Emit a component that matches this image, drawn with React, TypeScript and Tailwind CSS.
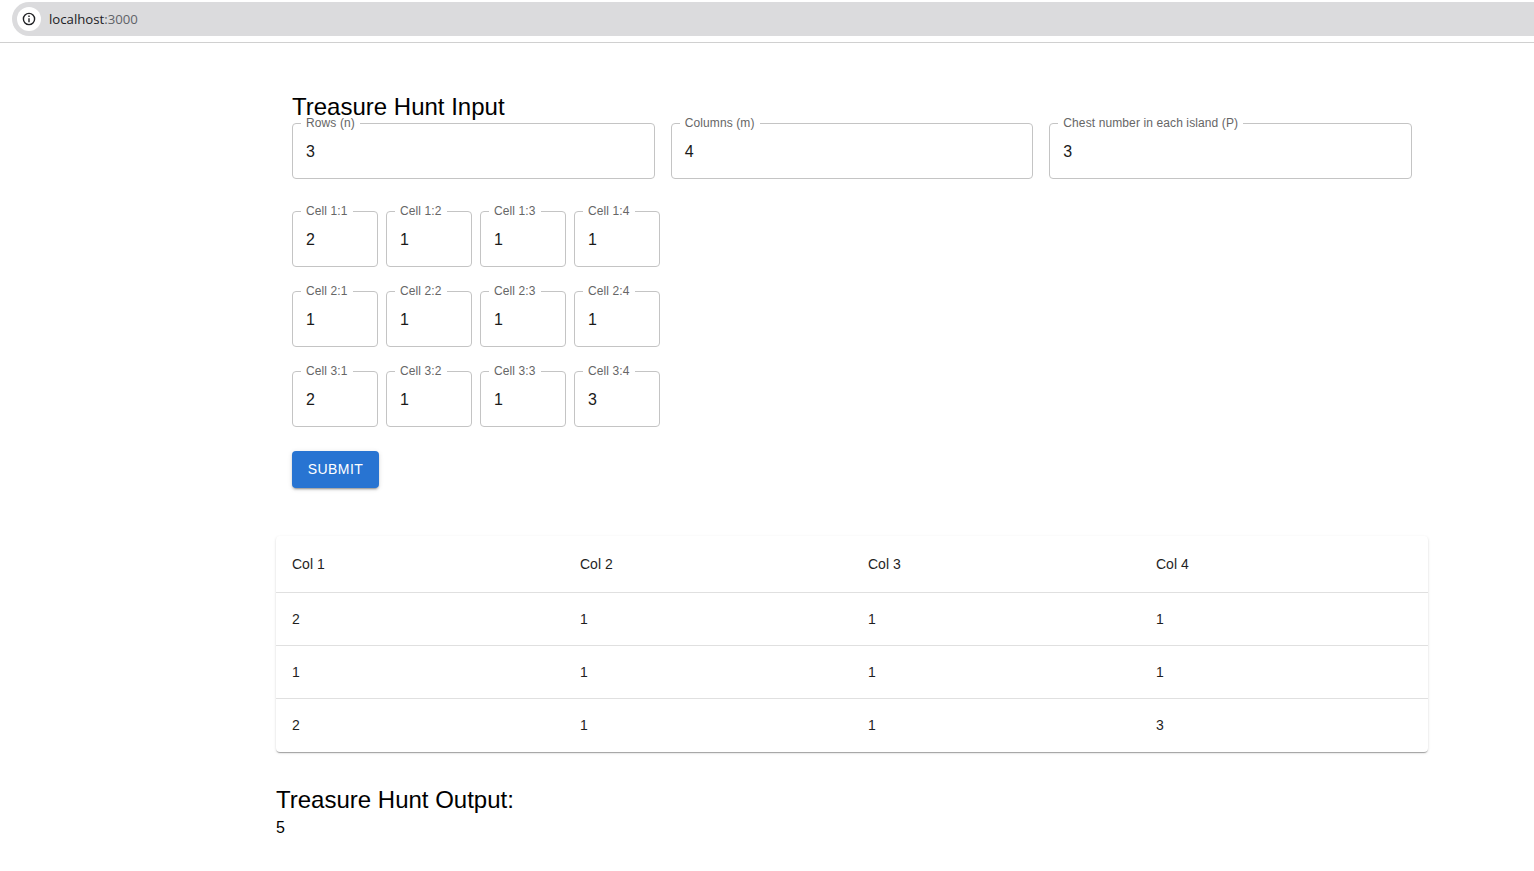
const params = [
  { label: "Rows (n)", value: "3" },
  { label: "Columns (m)", value: "4" },
  { label: "Chest number in each island (P)", value: "3" },
]

const grid = [
  [2, 1, 1, 1],
  [1, 1, 1, 1],
  [2, 1, 1, 3],
]

function Field({ label, value, className }: { label: string; value: string; className: string }) {
  return (
    <div className={`relative h-14 rounded border border-[#c4c4c4] ${className}`}>
      <span className="absolute left-[8px] top-[-8px] bg-white px-[5px] text-xs leading-[15px] tracking-[0.11px] text-[#666666] whitespace-nowrap">
        {label}
      </span>
      <div className="pl-[13px] pt-[17px] text-base leading-[21px] text-[#1a1a1a]">{value}</div>
    </div>
  )
}

export default function App() {
  return (
    <div className="min-h-[871px] bg-white font-['Liberation_Sans',Arial,sans-serif]">
      {/* address bar */}
      <div className="h-[43px] border-b border-[#d0d0d0] pt-[2px]">
        <div className="ml-3 flex h-[34px] items-center rounded-l-full bg-[#dbdbdd] pl-[5px]">
          <div className="flex h-6 w-6 items-center justify-center rounded-full bg-white">
            <svg width="14" height="14" viewBox="0 0 14 14" fill="none" stroke="#202124" strokeWidth="1.4">
              <circle cx="7" cy="7" r="5.6" />
              <path d="M7 6.2V10.2" />
              <path d="M7 3.6V5" />
            </svg>
          </div>
          <span className="ml-2 pt-0.5 font-['Open_Sans',sans-serif] text-[13.2px] text-[#202124]">
            localhost<span className="text-[#5f6368]">:3000</span>
          </span>
        </div>
      </div>

      <div className="ml-[276px] w-[1152px] pt-[49px]">
        <div className="px-4">
          <h2 className="pb-px text-2xl leading-[30px] text-black">Treasure Hunt Input</h2>
          <div className="flex gap-4">
            {params.map((p) => (
              <Field key={p.label} label={p.label} value={p.value} className="w-[362.67px]" />
            ))}
          </div>

          <div className="mt-8 flex flex-col gap-6">
            {grid.map((row, r) => (
              <div key={r} className="flex gap-2">
                {row.map((v, c) => (
                  <Field key={c} label={`Cell ${r + 1}:${c + 1}`} value={String(v)} className="w-[86px]" />
                ))}
              </div>
            ))}
          </div>

          <button className="mt-6 flex h-[37px] w-[87px] items-center justify-center rounded bg-[#2874d2] pb-px text-sm tracking-[0.4px] text-white shadow-[0_3px_1px_-2px_rgba(0,0,0,0.2),0_2px_2px_0_rgba(0,0,0,0.14),0_1px_5px_0_rgba(0,0,0,0.12)]">
            SUBMIT
          </button>
        </div>

        <div className="mt-12 rounded bg-white shadow-[0_2px_1px_-1px_rgba(0,0,0,0.2),0_1px_1px_0_rgba(0,0,0,0.14),0_1px_3px_0_rgba(0,0,0,0.12)]">
          <div className="grid h-[57px] grid-cols-4 items-center border-b border-[#e0e0e0] text-sm text-[#1f1f1f]">
            {[1, 2, 3, 4].map((n) => (
              <div key={n} className="pl-4">Col {n}</div>
            ))}
          </div>
          {grid.map((row, r) => (
            <div
              key={r}
              className={`grid h-[53px] grid-cols-4 items-center border-b text-sm text-[#1f1f1f] ${r < 2 ? "border-[#e0e0e0]" : "border-transparent"}`}
            >
              {row.map((v, c) => (
                <div key={c} className="pl-4">{v}</div>
              ))}
            </div>
          ))}
        </div>

        <h2 className="mt-[33px] text-2xl leading-[30px] text-black">Treasure Hunt Output:</h2>
        <div className="pt-px text-base leading-6 text-black">5</div>
      </div>
    </div>
  )
}
